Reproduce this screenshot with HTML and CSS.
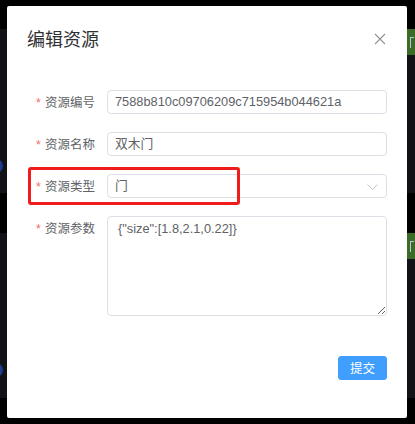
FILE: index.html
```html
<!DOCTYPE html>
<html lang="zh-CN">
<head>
<meta charset="utf-8">
<link rel="stylesheet" href="styles.css">
</head>
<body>
<div class="page">
  <div class="band band-one">
    <span class="dot"></span>
    <span class="tag"><span class="tag-glyph"></span></span>
  </div>
  <div class="band band-two">
    <span class="dot"></span>
    <span class="tag"><span class="tag-glyph"></span></span>
  </div>
</div>

<div class="dialog">
  <div class="dialog-header">
    <span class="dialog-title">编辑资源</span>
    <svg class="close" width="12" height="12" viewBox="0 0 12 12"><path d="M1 1L11 11M11 1L1 11" stroke="#909399" stroke-width="1.1" fill="none"/></svg>
  </div>
  <div class="dialog-body">
    <div class="form-item">
      <label class="label"><span class="req">*</span>资源编号</label>
      <div class="control"><div class="input">7588b810c09706209c715954b044621a</div></div>
    </div>
    <div class="form-item">
      <label class="label"><span class="req">*</span>资源名称</label>
      <div class="control"><div class="input">双木门</div></div>
    </div>
    <div class="form-item marked">
      <label class="label"><span class="req">*</span>资源类型</label>
      <div class="control">
        <div class="input select">门
          <svg class="arrow" width="11" height="6" viewBox="0 0 11 6"><path d="M0.5 0.5L5.5 5.5L10.5 0.5" stroke="#c0c4cc" stroke-width="1" fill="none"/></svg>
        </div>
      </div>
      <span class="highlight"></span>
    </div>
    <div class="form-item tall">
      <label class="label"><span class="req">*</span>资源参数</label>
      <div class="control"><textarea class="textarea" readonly>{"size":[1.8,2.1,0.22]}</textarea></div>
    </div>
  </div>
  <div class="dialog-footer">
    <button class="btn">提交</button>
  </div>
</div>
</body>
</html>
```

FILE: styles.css
```css
* { box-sizing: border-box; }
html, body { margin: 0; padding: 0; }
body {
  width: 415px;
  height: 424px;
  background: #000;
  overflow: hidden;
  font-family: "Liberation Sans", "Noto Sans CJK SC", sans-serif;
  position: relative;
}
.page {
  padding-top: 29px;
  display: flex;
  flex-direction: column;
  gap: 40px;
}
.band {
  position: relative;
  background: #121316;
}
.band-one { height: 164px; }
.band-two { height: 165px; }
.dot {
  position: absolute;
  left: -11px;
  top: 130px;
  width: 14px;
  height: 14px;
  border-radius: 50%;
  background: #1d3c8c;
}
.tag {
  position: absolute;
  left: 407px;
  top: 0;
  width: 8px;
  height: 26px;
  background: #3b6b27;
}
.tag-glyph {
  position: absolute;
  left: 3px;
  top: 8px;
  width: 4px;
  height: 11px;
  border-left: 1px solid #b8c4dc;
  border-top: 1px solid #b8c4dc;
}

.dialog {
  position: absolute;
  left: 7px;
  top: 6px;
  width: 400px;
  height: 412px;
  background: #fff;
  border-radius: 2px;
  display: flex;
  flex-direction: column;
}
.dialog-header {
  padding: 20px 20px 10px;
  display: flex;
  align-items: center;
  justify-content: space-between;
  height: 54px;
}
.dialog-title {
  font-family: "Noto Sans CJK SC", sans-serif;
  font-size: 18px;
  line-height: 24px;
  color: #303133;
}
.close { margin-right: 1px; margin-top: 1px; }
.dialog-body {
  padding: 30px 20px 30px;
  display: flex;
  flex-direction: column;
  gap: 18px;
}
.form-item {
  display: flex;
  position: relative;
}
.label {
  width: 80px;
  flex: none;
  padding-right: 12px;
  text-align: right;
  font-family: "Noto Sans CJK SC", sans-serif;
  font-size: 12.5px;
  line-height: 24px;
  height: 24px;
  color: #606266;
}
.req {
  color: #f56c6c;
  margin-right: 4px;
  font-family: "Liberation Sans", sans-serif;
}
.control { flex: 1; }
.input {
  height: 24px;
  border: 1px solid #dcdfe6;
  border-radius: 4px;
  padding: 0 7px;
  font-size: 12.8px;
  line-height: 22px;
  color: #606266;
  font-family: "Liberation Sans", "Noto Sans CJK SC", sans-serif;
}
.select {
  position: relative;
}
.arrow {
  position: absolute;
  right: 8px;
  top: 9px;
}
.highlight {
  position: absolute;
  left: 1px;
  top: -7px;
  width: 212px;
  height: 38px;
  border: 3px solid #f01c1c;
  border-radius: 3px;
  pointer-events: none;
}
.textarea {
  display: block;
  width: 100%;
  height: 100px;
  border: 1px solid #dcdfe6;
  border-radius: 4px;
  padding: 3px 10px;
  font-family: "Liberation Sans", sans-serif;
  font-size: 12.8px;
  line-height: 18px;
  color: #606266;
  resize: vertical;
  outline: none;
  margin: 0;
}
.dialog-footer {
  padding: 10px 20px 20px;
  display: flex;
  justify-content: flex-end;
}
.btn {
  height: 24px;
  padding: 0 11px;
  border: 1px solid #409eff;
  background: #409eff;
  color: #fff;
  border-radius: 3px;
  font-family: "Noto Sans CJK SC", sans-serif;
  font-size: 12.5px;
  line-height: 22px;
}
```
